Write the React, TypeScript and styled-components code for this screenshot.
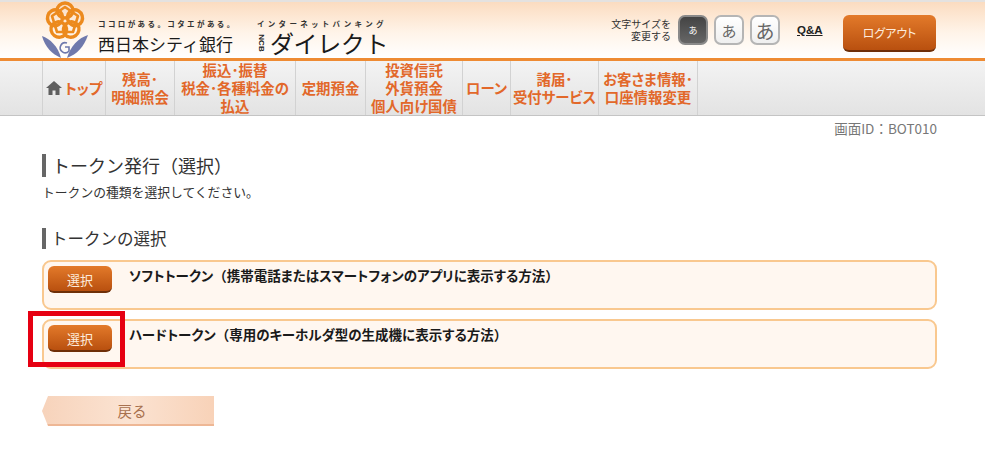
import React from 'react';
import styled, { createGlobalStyle } from 'styled-components';

const navItems = [
  { label: ['トップ'], width: 63, home: true },
  { label: ['残高･', '明細照会'], width: 69 },
  { label: ['振込･振替', '税金･各種料金の', '払込'], width: 121 },
  { label: ['定期預金'], width: 70 },
  { label: ['投資信託', '外貨預金', '個人向け国債'], width: 97 },
  { label: ['ローン'], width: 48 },
  { label: ['諸届･', '受付サービス'], width: 88 },
  { label: ['お客さま情報･', '口座情報変更'], width: 100 },
];

const tokens = [
  { id: 'soft', name: 'ソフトトークン', note: '携帯電話またはスマートフォンのアプリに表示する方法' },
  { id: 'hard', name: 'ハードトークン', note: '専用のキーホルダ型の生成機に表示する方法', marked: true },
];

const petals = [0, 72, 144, 216, 288];

function Logo() {
  return (
    <svg width="50" height="58" viewBox="0 0 50 58">
      <g fill="none" stroke="#ec8a1e" strokeWidth="3.4">
        {petals.map((angle) => (
          <ellipse key={angle} cx="23" cy="10.5" rx="8" ry="7.5" transform={`rotate(${angle} 23 21)`} />
        ))}
        <path d="M23 7 L36 16 L31 32 L15 32 L10 16 Z" strokeLinejoin="round" strokeWidth="2.6" />
      </g>
      <path d="M0 36 C8 39 16 46 19 58 C10 54 3 47 0 36 Z" fill="#6f79ac" />
      <path d="M46 35 C36 38 28 47 25 58 C35 54 42 47 46 35 Z" fill="#6f79ac" />
      <path d="M25 43 a5 5 0 1 0 2 8 l0 -4 l-4 0" fill="none" stroke="#6f79ac" strokeWidth="1.6" />
    </svg>
  );
}

function HomeIcon() {
  return (
    <svg width="16" height="14" viewBox="0 0 16 14">
      <path d="M8 0 L16 7 L13.5 7 L13.5 14 L9.5 14 L9.5 9.5 L6.5 9.5 L6.5 14 L2.5 14 L2.5 7 L0 7 Z" fill="#5f5f5f" />
    </svg>
  );
}

export default function App() {
  return (
    <>
      <GlobalStyle />
      <Header>
        <Brand>
          <Logo />
          <BrandText>
            <Tagline>ココロがある。コタエがある。</Tagline>
            <BankName>西日本シティ銀行</BankName>
          </BrandText>
          <DirectText>
            <BankingLabel>インターネットバンキング</BankingLabel>
            <DirectRow>
              <NcbMark>NCB</NcbMark>
              <DirectName>ダイレクト</DirectName>
            </DirectRow>
          </DirectText>
        </Brand>
        <Tools>
          <SizeLabel>
            文字サイズを
            <br />
            変更する
          </SizeLabel>
          <SizeButtons>
            <SizeButton $size={9} $active>あ</SizeButton>
            <SizeButton $size={15}>あ</SizeButton>
            <SizeButton $size={19}>あ</SizeButton>
          </SizeButtons>
          <QaLink>Q&amp;A</QaLink>
          <LogoutButton>ログアウト</LogoutButton>
        </Tools>
      </Header>
      <Nav>
        {navItems.map((item) => (
          <NavItem key={item.label[0]} $width={item.width}>
            {item.home && <HomeIcon />}
            <NavLabel>
              {item.label.map((line) => (
                <span key={line}>{line}</span>
              ))}
            </NavLabel>
          </NavItem>
        ))}
      </Nav>
      <Main>
        <ScreenId>画面ID：BOT010</ScreenId>
        <PageTitle>トークン発行（選択）</PageTitle>
        <Description>トークンの種類を選択してください。</Description>
        <SectionTitle>トークンの選択</SectionTitle>
        <TokenList>
          {tokens.map((token) => (
            <TokenCard key={token.id}>
              <SelectButton>選択</SelectButton>
              <TokenLabel>
                <TokenName>{token.name}</TokenName>
                （<TokenName>{token.note}</TokenName>）
              </TokenLabel>
              {token.marked && <RedMark />}
            </TokenCard>
          ))}
        </TokenList>
        <BackButton>戻る</BackButton>
      </Main>
    </>
  );
}

const GlobalStyle = createGlobalStyle`
  body {
    margin: 0;
    background: #fff;
    color: #222;
    font-family: "Noto Sans CJK JP", "Liberation Sans", sans-serif;
  }
  * {
    box-sizing: border-box;
  }
`;

const Header = styled.header`
  height: 61px;
  padding: 0 49px 0 42px;
  display: flex;
  justify-content: space-between;
  border-top: 2px solid #e4e2e0;
  border-bottom: 3px solid #ee8b33;
  background: linear-gradient(#fbdcc0, #fff4e9 55%, #fff);
`;

const Brand = styled.div`
  display: flex;
  align-items: flex-end;
`;

const BrandText = styled.div`
  margin-left: 6px;
  width: 159px;
  padding-bottom: 3px;
`;

const Tagline = styled.div`
  font-size: 7.5px;
  line-height: 10px;
  font-weight: 700;
  letter-spacing: 2.4px;
  white-space: nowrap;
  color: #333;
`;

const BankingLabel = styled(Tagline)`
  letter-spacing: 3.3px;
  margin-top: 2px;
`;

const BankName = styled.div`
  margin-top: 4px;
  font-size: 17px;
  line-height: 22px;
  white-space: nowrap;
  color: #1a1a1a;
`;

const DirectText = styled.div`
  padding-bottom: 3px;
`;

const DirectRow = styled.div`
  margin-top: 1px;
  display: flex;
  align-items: center;
`;

const NcbMark = styled.span`
  width: 7px;
  margin-right: 6px;
  display: flex;
  justify-content: center;
  transform: rotate(90deg);
  font-family: "Liberation Sans", sans-serif;
  font-size: 8px;
  line-height: 8px;
  font-weight: 700;
  color: #222;
`;

const DirectName = styled.span`
  font-size: 24px;
  line-height: 25px;
  letter-spacing: -0.4px;
  white-space: nowrap;
  color: #1a1a1a;
`;

const Tools = styled.div`
  display: flex;
  align-items: center;
`;

const SizeLabel = styled.div`
  font-size: 10px;
  line-height: 12px;
  text-align: right;
  color: #333;
`;

const SizeButtons = styled.div`
  margin-left: 7px;
  display: flex;
  gap: 6px;
`;

const SizeButton = styled.div<{ $size: number; $active?: boolean }>`
  width: 30px;
  height: 30px;
  display: flex;
  align-items: center;
  justify-content: center;
  border-radius: 7px;
  border: 2px solid ${({ $active }) => ($active ? '#8a8a8a' : '#b5b5b5')};
  background: ${({ $active }) =>
    $active ? 'linear-gradient(#444, #666)' : 'linear-gradient(#fff, #efefef)'};
  color: ${({ $active }) => ($active ? '#fff' : '#666')};
  font-size: ${({ $size }) => $size}px;
`;

const QaLink = styled.a`
  margin-left: 17px;
  width: 46px;
  font-size: 11.5px;
  font-weight: 700;
  text-decoration: underline;
  color: #222;
  font-family: "Liberation Sans", sans-serif;
`;

const LogoutButton = styled.div`
  margin-top: 6px;
  width: 93px;
  height: 37px;
  display: flex;
  align-items: center;
  justify-content: center;
  border-radius: 6px;
  border-bottom: 2px solid #6e2f08;
  background: linear-gradient(#e37a2a, #b9500f);
  color: #fdebdc;
  font-size: 12px;
  font-feature-settings: "palt";
`;

const Nav = styled.nav`
  height: 55px;
  padding-left: 42px;
  display: flex;
  border-bottom: 1px solid #c4c4c4;
  background: linear-gradient(#f3f3f3, #e3e3e3);
`;

const NavItem = styled.div<{ $width: number }>`
  width: ${({ $width }) => $width}px;
  display: flex;
  align-items: center;
  justify-content: center;
  gap: 3px;
  border-left: 1px solid #d2d2d2;
  &:last-child {
    border-right: 1px solid #d2d2d2;
  }
`;

const NavLabel = styled.div`
  display: flex;
  flex-direction: column;
  align-items: center;
  color: #e2682a;
  font-size: 14.4px;
  line-height: 18px;
  font-weight: 700;
  font-feature-settings: "palt";
  white-space: nowrap;
`;

const Main = styled.main`
  padding: 3px 48px 0 42px;
`;

const ScreenId = styled.div`
  font-size: 13.5px;
  line-height: 18px;
  text-align: right;
  color: #777;
`;

const PageTitle = styled.h1`
  margin: 17px 0 0;
  padding-left: 6px;
  border-left: 4px solid #666;
  height: 23px;
  font-size: 18px;
  line-height: 22px;
  font-weight: 400;
  color: #333;
`;

const Description = styled.p`
  margin: 6px 0 0;
  font-size: 12.8px;
  line-height: 18px;
  color: #333;
`;

const SectionTitle = styled.h2`
  margin: 27px 0 0;
  padding-left: 5px;
  border-left: 4px solid #666;
  height: 21px;
  font-size: 16.5px;
  line-height: 21px;
  font-weight: 400;
  color: #333;
`;

const TokenList = styled.div`
  margin-top: 11px;
  display: flex;
  flex-direction: column;
  gap: 9px;
`;

const TokenCard = styled.div`
  position: relative;
  height: 50px;
  padding: 4px 0 0 4px;
  display: flex;
  align-items: flex-start;
  border: 2px solid #f9c88f;
  border-radius: 9px;
  background: #fff7f0;
`;

const SelectButton = styled.div`
  width: 64px;
  height: 27px;
  padding-top: 2px;
  display: flex;
  align-items: center;
  justify-content: center;
  border-radius: 6px;
  border-bottom: 2px solid #6e2f08;
  background: linear-gradient(#e37a2a, #b9500f);
  color: #fdebdc;
  font-size: 13px;
`;

const TokenLabel = styled.div`
  margin: -1px 0 0 17px;
  font-size: 13.5px;
  line-height: 20px;
  font-weight: 700;
  color: #1a1a1a;
`;

const TokenName = styled.span`
  font-feature-settings: "palt";
`;

const RedMark = styled.div`
  position: absolute;
  left: -16px;
  top: -10px;
  width: 97px;
  height: 56px;
  border: 5px solid #e60012;
`;

const BackButton = styled.div`
  margin-top: 27px;
  width: 172px;
  height: 30px;
  padding-left: 8px;
  display: flex;
  align-items: center;
  justify-content: center;
  clip-path: polygon(6px 0, 100% 0, 100% 100%, 6px 100%, 0 50%);
  border-bottom: 2px solid #eeb795;
  background: linear-gradient(90deg, #f7d3bb, #fbe3d2 50%, #f8d2b8);
  color: #a8714f;
  font-size: 14.5px;
`;
